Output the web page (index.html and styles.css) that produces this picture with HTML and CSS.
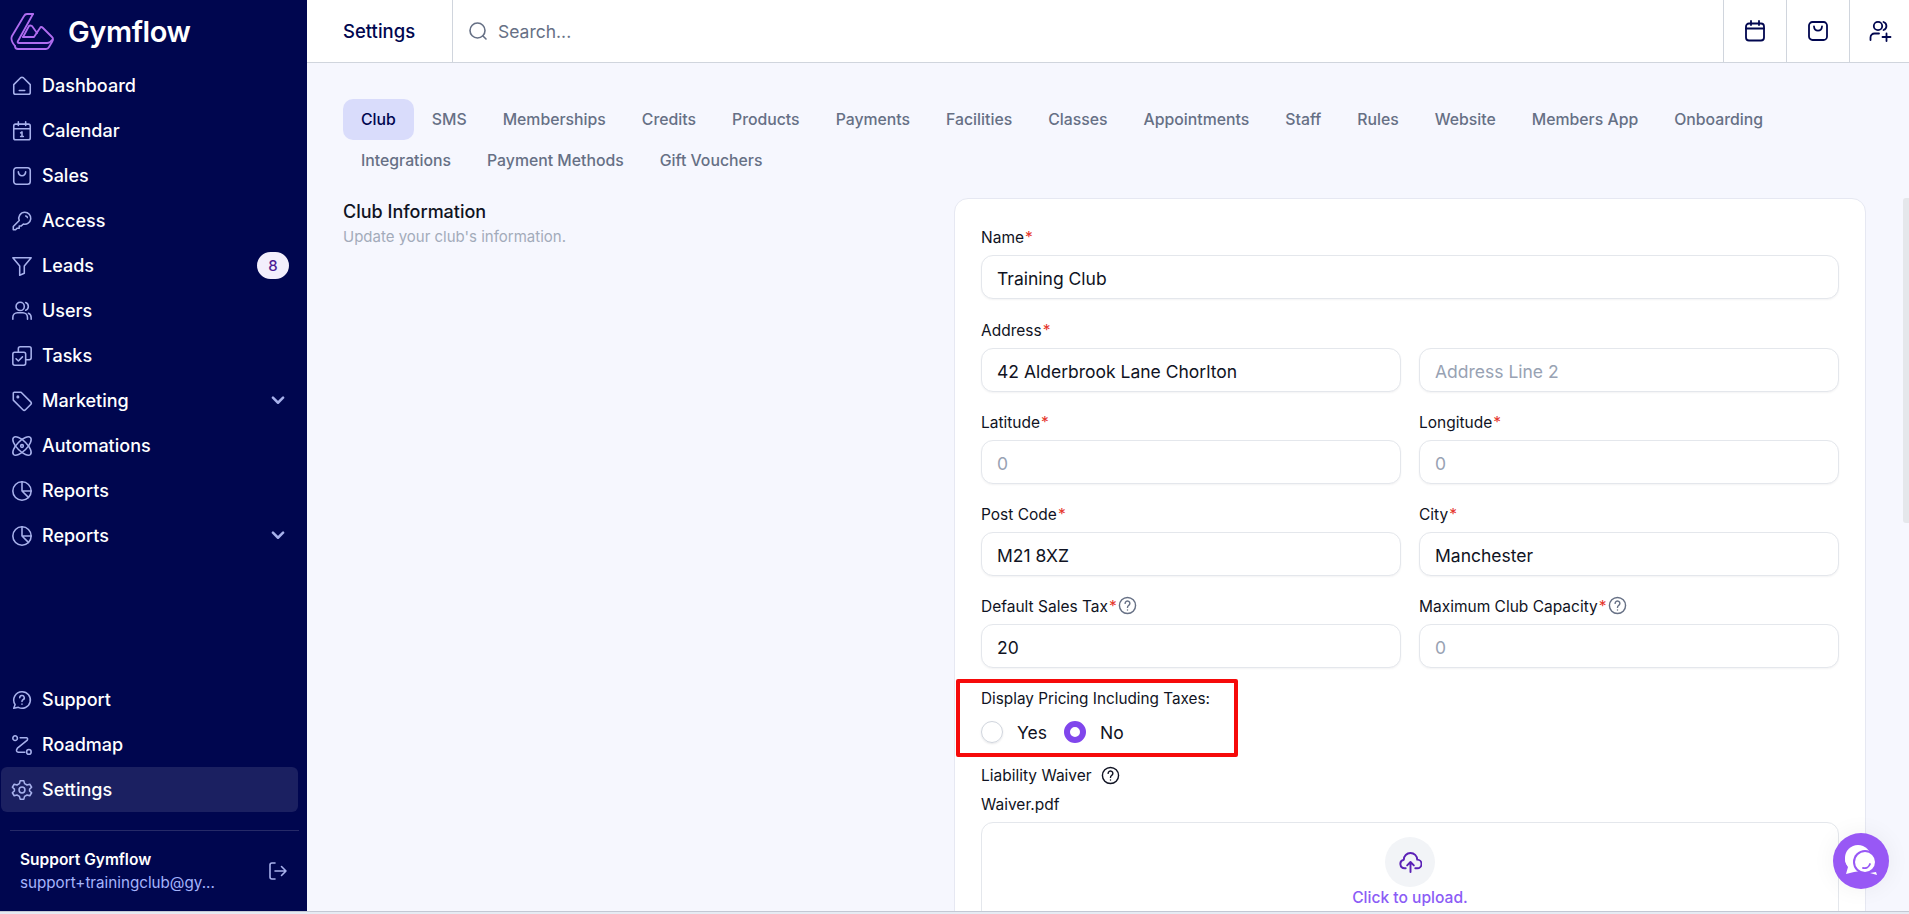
FILE: index.html
```html
<!DOCTYPE html>
<html lang="en">
<head>
  <meta charset="UTF-8">
  <meta name="viewport" content="width=device-width, initial-scale=1">
  <title>Gymflow - Settings</title>
  <link rel="stylesheet" href="styles.css">
</head>
<body>

  <div class="app">
    <aside class="sidebar">
      <div class="brand">
        <svg class="brand-logo" viewBox="10 13 44 38" fill="none" stroke="#b06cf0" stroke-width="1.8" stroke-linejoin="round" stroke-linecap="round">
          <path d="M33 14 H27 Q25 14 24 16 L12 36 Q10 40 15 46"/>
          <path d="M33 14 L18 41 Q17 43 19 43 H47 Q50 43 52 40"/>
          <path d="M23 37 L29 26 Q30 25 32 26 L37 33"/>
          <path d="M23 37 H34 L40 28 Q41 26 43 28 L52 37 Q54 39 52 42 L49 47 Q48 49 46 49 H18 Q15 49 15 46"/>
        </svg>
        <span class="brand-name">Gymflow</span>
      </div>

      <nav class="nav">
        <a class="nav-item"><svg class="nav-icon" viewBox="0 0 24 24"><path d="M3 10.500 L10.500 3 Q12 2 13.500 3 L21 10.500 V19 a2 2 0 0 1-2 2 H5 a2 2 0 0 1-2-2 Z"/><path d="M9 17 H15"/></svg>Dashboard</a>
        <a class="nav-item"><svg class="nav-icon" viewBox="0 0 24 24"><rect x="3" y="4.500" width="18" height="17" rx="2"/><path d="M3 9.500 H21 M8 2 V6 M16 2 V6"/><path d="M10.500 14 L12 13 V18 M10.500 18 H13.500"/></svg>Calendar</a>
        <a class="nav-item"><svg class="nav-icon" viewBox="0 0 24 24"><rect x="3" y="3" width="18" height="18" rx="3"/><path d="M8 7.500 C8.500 13 15.500 13 16 7.500"/></svg>Sales</a>
        <a class="nav-item"><svg class="nav-icon" viewBox="0 0 24 24"><path d="M15 2.500 a6.500 6.500 0 1 1 -1.500 12.800 L11 17.500 H9 V20 H6.500 L5 21.500 H2.500 V18 L9 11.500 A6.500 6.500 0 0 1 15 2.500 Z"/><path d="M16 6.500 a1.800 1.800 0 0 1 1.800 1.800"/></svg>Access</a>
        <a class="nav-item"><svg class="nav-icon" viewBox="0 0 24 24"><path d="M2 3 H22 L14.500 12 V20 L9.500 22 V12 Z"/></svg>Leads<span class="nav-badge">8</span></a>
        <a class="nav-item"><svg class="nav-icon" viewBox="0 0 24 24"><circle cx="10" cy="7" r="4.500"/><path d="M2 21 V19 a5 5 0 0 1 5-5 H13 a5 5 0 0 1 5 5 V21"/><path d="M16 2.800 a4.500 4.500 0 0 1 0 8.400 M19 14.500 a5 5 0 0 1 3 4.500 V21"/></svg>Users</a>
        <a class="nav-item"><svg class="nav-icon" viewBox="0 0 24 24"><rect x="2" y="8" width="14" height="14" rx="2"/><path d="M8 8 V4 a2 2 0 0 1 2-2 H20 a2 2 0 0 1 2 2 V14 a2 2 0 0 1-2 2 H16"/><path d="M5.500 15 L8 17.500 L12.500 13"/></svg>Tasks</a>
        <a class="nav-item"><svg class="nav-icon" viewBox="0 0 24 24"><path d="M2.500 3.500 a1 1 0 0 1 1-1 H11 L21.500 13 a2 2 0 0 1 0 2.800 L15.800 21.500 a2 2 0 0 1-2.800 0 L2.500 11 Z"/><circle cx="7.500" cy="7.500" r="0.800"/></svg>Marketing<svg class="nav-chevron" viewBox="0 0 12 8"><path d="M1.500 1.500 L6 6 L10.500 1.500"/></svg></a>
        <a class="nav-item"><svg class="nav-icon" viewBox="0 0 24 24"><ellipse cx="12" cy="12" rx="13" ry="5.500" transform="rotate(45 12 12)"/><ellipse cx="12" cy="12" rx="13" ry="5.500" transform="rotate(-45 12 12)"/><circle cx="12" cy="12" r="1.500"/></svg>Automations</a>
        <a class="nav-item"><svg class="nav-icon" viewBox="0 0 24 24"><circle cx="12" cy="12" r="10"/><path d="M12 2 V12 H22 M12 12 L19 19"/></svg>Reports</a>
        <a class="nav-item"><svg class="nav-icon" viewBox="0 0 24 24"><circle cx="12" cy="12" r="10"/><path d="M12 2 V12 H22 M12 12 L19 19"/></svg>Reports<svg class="nav-chevron" viewBox="0 0 12 8"><path d="M1.500 1.500 L6 6 L10.500 1.500"/></svg></a>
      </nav>

      <nav class="nav nav-bottom">
        <a class="nav-item"><svg class="nav-icon" viewBox="0 0 24 24"><path d="M12 3 a9 9 0 1 1 -4 17 L3 21 L4.500 17 A9 9 0 0 1 12 3 Z"/><path d="M9.500 9.500 a2.500 2.500 0 1 1 3.500 2.300 Q12 12.300 12 13.500 M12 16.500 V16.600"/></svg>Support</a>
        <a class="nav-item"><svg class="nav-icon" viewBox="0 0 24 24"><circle cx="4.500" cy="4.500" r="2.500"/><circle cx="19.500" cy="19.500" r="2.500"/><path d="M10 4 H17 Q19 5 17.500 7 L7 15.500 Q4.500 19 8 20 H15"/></svg>Roadmap</a>
        <a class="nav-item nav-item-active"><svg class="nav-icon" viewBox="0 0 24 24"><circle cx="12" cy="12" r="3.200"/><path d="M10 2 H14 L14.800 5 L17.500 6.500 L20.500 5.700 L22.500 9 L20.300 11 V13 L22.500 15 L20.500 18.300 L17.500 17.500 L14.800 19 L14 22 H10 L9.200 19 L6.500 17.500 L3.500 18.300 L1.500 15 L3.700 13 V11 L1.500 9 L3.500 5.700 L6.500 6.500 L9.200 5 Z"/></svg>Settings</a>
      </nav>

      <div class="user-block">
        <div class="user-text">
          <div class="user-name">Support Gymflow</div>
          <div class="user-email">support+trainingclub@gy...</div>
        </div>
        <svg class="user-logout" viewBox="0 0 20 20"><path d="M7 2 H4 a2 2 0 0 0-2 2 V16 a2 2 0 0 0 2 2 H7"/><path d="M7 10 H18 M13.500 5.500 L18 10 L13.500 14.500"/></svg>
      </div>
    </aside>

    <div class="main">
      <header class="topbar">
        <div class="topbar-title">Settings</div>
        <div class="topbar-search">
          <svg class="search-icon" viewBox="0 0 20 20"><circle cx="9.500" cy="9.500" r="7.500"/><path d="M15 15 L18 18"/></svg>
          <input class="search-input" type="text" placeholder="Search...">
        </div>
        <button class="topbar-btn"><svg viewBox="0 0 24 24"><rect x="3" y="4.500" width="18" height="17" rx="3"/><path d="M3 9.500 H21 M8 2 V6 M16 2 V6"/></svg></button>
        <button class="topbar-btn"><svg viewBox="0 0 24 24"><rect x="3" y="3" width="18" height="18" rx="3.500"/><path d="M8 7.500 C8.500 13 15.500 13 16 7.500"/></svg></button>
        <button class="topbar-btn topbar-btn-last"><svg viewBox="0 0 24 24"><circle cx="10" cy="7" r="4.200"/><path d="M2.500 21 V18.500 a4 4 0 0 1 4-4 H11"/><path d="M15.500 3 a4.200 4.200 0 0 1 0 8 M18.500 14.500 V22 M14.500 18 H22.500"/></svg></button>
      </header>

      <div class="content">
        <div class="tabs">
          <a class="tab tab-active">Club</a>
          <a class="tab">SMS</a>
          <a class="tab">Memberships</a>
          <a class="tab">Credits</a>
          <a class="tab">Products</a>
          <a class="tab">Payments</a>
          <a class="tab">Facilities</a>
          <a class="tab">Classes</a>
          <a class="tab">Appointments</a>
          <a class="tab">Staff</a>
          <a class="tab">Rules</a>
          <a class="tab">Website</a>
          <a class="tab">Members App</a>
          <a class="tab">Onboarding</a>
          <a class="tab">Integrations</a>
          <a class="tab">Payment Methods</a>
          <a class="tab">Gift Vouchers</a>
        </div>

        <div class="section">
          <div class="section-intro">
            <h2 class="section-title">Club Information</h2>
            <p class="section-sub">Update your club's information.</p>
          </div>

          <div class="card">
            <div class="field field-first">
              <label class="field-label">Name<span class="req">*</span></label>
              <input class="field-input" type="text" value="Training Club">
            </div>

            <div class="field-row">
              <div class="field">
                <label class="field-label">Address<span class="req">*</span></label>
                <input class="field-input" type="text" value="42 Alderbrook Lane Chorlton">
              </div>
              <div class="field">
                <label class="field-label field-label-blank">&nbsp;</label>
                <input class="field-input" type="text" placeholder="Address Line 2">
              </div>
            </div>

            <div class="field-row">
              <div class="field">
                <label class="field-label">Latitude<span class="req">*</span></label>
                <input class="field-input" type="text" placeholder="0">
              </div>
              <div class="field">
                <label class="field-label">Longitude<span class="req">*</span></label>
                <input class="field-input" type="text" placeholder="0">
              </div>
            </div>

            <div class="field-row">
              <div class="field">
                <label class="field-label">Post Code<span class="req">*</span></label>
                <input class="field-input" type="text" value="M21 8XZ">
              </div>
              <div class="field">
                <label class="field-label">City<span class="req">*</span></label>
                <input class="field-input" type="text" value="Manchester">
              </div>
            </div>

            <div class="field-row">
              <div class="field">
                <label class="field-label">Default Sales Tax<span class="req">*</span>
                  <svg class="help-icon" viewBox="0 0 20 20"><circle cx="10" cy="10" r="8.500"/><path d="M7.500 7.800 a2.500 2.500 0 1 1 3.800 2.100 Q10 10.700 10 12 M10 14.600 V14.700"/></svg>
                </label>
                <input class="field-input" type="text" value="20">
              </div>
              <div class="field">
                <label class="field-label">Maximum Club Capacity<span class="req">*</span>
                  <svg class="help-icon" viewBox="0 0 20 20"><circle cx="10" cy="10" r="8.500"/><path d="M7.500 7.800 a2.500 2.500 0 1 1 3.800 2.100 Q10 10.700 10 12 M10 14.600 V14.700"/></svg>
                </label>
                <input class="field-input" type="text" placeholder="0">
              </div>
            </div>

            <div class="pricing">
              <div class="pricing-label">Display Pricing Including Taxes:</div>
              <div class="radios">
                <label class="radio"><input type="radio" name="pricing">Yes</label>
                <label class="radio"><input type="radio" name="pricing" checked>No</label>
              </div>
              <div class="highlight-box"></div>
            </div>

            <div class="waiver-label">Liability Waiver
              <svg class="help-icon help-icon-dark" viewBox="0 0 20 20"><circle cx="10" cy="10" r="8.500"/><path d="M7.500 7.800 a2.500 2.500 0 1 1 3.800 2.100 Q10 10.700 10 12 M10 14.600 V14.700"/></svg>
            </div>
            <div class="waiver-file">Waiver.pdf</div>

            <div class="upload">
              <div class="upload-circle">
                <svg viewBox="0 0 24 24"><path d="M7 18 H6 a4.500 4.500 0 0 1-1-8.900 A7 7 0 0 1 19 9 a4.500 4.500 0 0 1 0 9 H17"/><path d="M12 22 V12 M8.500 15 L12 11.500 L15.500 15"/></svg>
              </div>
              <div class="upload-text">Click to upload.</div>
            </div>
          </div>
        </div>

        <div class="scroll-thumb"></div>
      </div>
    </div>

    <button class="chat-btn">
      <svg viewBox="0 0 40 40">
        <path d="M17 5 a13 13 0 0 0-10 21 L5 33 L13 31 L20 30 L17 5 Z" fill="#fff"/>
        <circle cx="17" cy="17" r="13" fill="#fff"/>
        <circle cx="24" cy="21" r="12" fill="#9858f5"/>
        <circle cx="24" cy="21" r="10" fill="#fff"/>
        <path d="M35 31 L36 34 L29 32 Z" fill="#fff"/>
        <path d="M22 27 a6 6 0 0 0 7-4" fill="none" stroke="#9858f5" stroke-width="1.800" stroke-linecap="round"/>
      </svg>
    </button>
  </div>

  <div class="window-edge"></div>

</body>
</html>
```

FILE: styles.css
```css
* {
  box-sizing: border-box;
}

body {
  font-family: Inter, "Noto Sans", Arial, sans-serif;
  margin: 0;
  padding: 0;
  height: 914px;
  overflow: hidden;
  background: #f6f7fe;
  color: #101323;
}

.app {
  display: flex;
  height: 911px;
  position: relative;
  overflow: hidden;
}

.window-edge {
  height: 3px;
  background: #e6ebf3;
  border-top: 1px solid #c4c8d4;
}

/* Sidebar */
.sidebar {
  width: 307px;
  flex-shrink: 0;
  background: #00064f;
  color: #fff;
  display: flex;
  flex-direction: column;
  padding-left: 1px;
}

.brand {
  height: 63px;
  display: flex;
  align-items: center;
  padding-left: 9px;
  gap: 15px;
}

.brand-logo {
  width: 44px;
  height: 38px;
}

.brand-name {
  font-size: 29px;
  font-weight: 600;
  letter-spacing: -0.4px;
  margin-left: -1px;
}

.nav {
  display: flex;
  flex-direction: column;
  width: 297px;
}

.nav-bottom {
  margin-top: auto;
}

.nav-item {
  height: 45px;
  display: flex;
  align-items: center;
  gap: 9px;
  padding-left: 10px;
  padding-right: 11px;
  border-radius: 6px;
  font-size: 18px;
  font-weight: 500;
}

.nav-item-active {
  background: #1b2061;
}

.nav-icon {
  width: 22px;
  height: 22px;
  flex-shrink: 0;
  fill: none;
  stroke: #a7b1ec;
  stroke-width: 1.7;
  stroke-linecap: round;
  stroke-linejoin: round;
}

.nav-badge {
  margin-left: auto;
  margin-right: -2px;
  width: 32px;
  height: 27px;
  border-radius: 14px;
  background: #f3effc;
  color: #4c1d95;
  font-size: 15px;
  display: flex;
  align-items: center;
  justify-content: center;
}

.nav-chevron {
  margin-left: auto;
  margin-right: 2px;
  width: 14px;
  height: 9px;
  fill: none;
  stroke: #a7b1ec;
  stroke-width: 2.2;
  stroke-linecap: round;
  stroke-linejoin: round;
}

.user-block {
  margin: 18px 8px 0 9px;
  height: 81px;
  border-top: 1px solid #262a68;
  display: flex;
  align-items: center;
  justify-content: space-between;
  padding: 0 1px 0 10px;
}

.user-text {
  flex: 1;
}

.user-name {
  font-size: 15.500px;
  font-weight: 600;
  line-height: 23px;
}

.user-email {
  font-size: 15.200px;
  color: #a5b4fc;
  line-height: 23px;
}

.user-logout {
  width: 20px;
  height: 20px;
  margin-right: 10px;
  fill: none;
  stroke: #a7b1ec;
  stroke-width: 1.6;
  stroke-linecap: round;
  stroke-linejoin: round;
}

/* Top bar */
.main {
  flex: 1;
  min-width: 0;
  display: flex;
  flex-direction: column;
}

.topbar {
  height: 63px;
  flex-shrink: 0;
  background: #fff;
  border-bottom: 1px solid #d0d5dd;
  display: flex;
  align-items: stretch;
}

.topbar-title {
  width: 146px;
  padding-left: 36px;
  display: flex;
  align-items: center;
  font-size: 18.500px;
  font-weight: 500;
  color: #00064f;
  border-right: 1px solid #d0d5dd;
}

.topbar-search {
  flex: 1;
  display: flex;
  align-items: center;
  gap: 10px;
  padding-left: 15px;
}

.search-icon {
  width: 20px;
  height: 20px;
  fill: none;
  stroke: #667085;
  stroke-width: 1.6;
  stroke-linecap: round;
}

.search-input {
  border: none;
  outline: none;
  flex: 1;
  padding: 0;
  font-family: inherit;
  font-size: 17.500px;
  color: #667085;
  background: transparent;
}

.search-input::placeholder {
  color: #667085;
}

.topbar-btn {
  width: 63px;
  background: #fff;
  border: none;
  border-left: 1px solid #d0d5dd;
  padding: 0;
  display: flex;
  align-items: center;
  justify-content: center;
}

.topbar-btn-last {
  width: 60px;
}

.topbar-btn svg {
  width: 24px;
  height: 24px;
  fill: none;
  stroke: #00064f;
  stroke-width: 1.8;
  stroke-linecap: round;
  stroke-linejoin: round;
}

/* Content */
.content {
  flex: 1;
  min-height: 0;
  position: relative;
  padding: 36px 43px 0 36px;
}

.tabs {
  display: flex;
  flex-wrap: wrap;
}

.tab {
  height: 41px;
  padding: 0 18px;
  display: flex;
  align-items: center;
  border-radius: 10px;
  font-size: 15.800px;
  font-weight: 500;
  color: #667085;
}

.tab-active {
  background: #d9dcfb;
  color: #00064f;
}

.section {
  display: flex;
  margin-top: 17px;
}

.section-intro {
  width: 611px;
  flex-shrink: 0;
  padding-top: 2px;
}

.section-title {
  margin: 0;
  font-size: 18px;
  font-weight: 500;
  line-height: 24px;
  color: #101323;
}

.section-sub {
  margin: 1px 0 0;
  font-size: 15px;
  line-height: 24px;
  color: #a3abba;
}

.card {
  width: 912px;
  height: 900px;
  background: #fff;
  border: 1px solid #e6e8f2;
  border-radius: 14px;
  padding: 28px 26px 0;
}

.field {
  flex: 1;
  min-width: 0;
  margin-bottom: 20px;
}

.field-first {
  margin-bottom: 21px;
}

.field-row {
  display: flex;
  gap: 18px;
}

.field-label {
  display: flex;
  align-items: center;
  height: 20px;
  margin-bottom: 8px;
  font-size: 15.500px;
  color: #101323;
}

.req {
  color: #e5342b;
  margin-left: 1px;
}

.help-icon {
  width: 19px;
  height: 19px;
  margin-left: 1px;
  margin-top: -2px;
  fill: none;
  stroke: #667085;
  stroke-width: 1.5;
  stroke-linecap: round;
}

.help-icon-dark {
  stroke: #101323;
  margin-left: 9px;
}

.field-input {
  display: block;
  width: 100%;
  height: 44px;
  padding: 2px 15px 0;
  border: 1px solid #e4e7ec;
  border-radius: 12px;
  box-shadow: 0 1px 2px rgba(16, 24, 40, 0.05);
  outline: none;
  font-family: inherit;
  font-size: 17.500px;
  color: #101323;
}

.field-input::placeholder {
  color: #98a2b3;
}

.pricing {
  position: relative;
  margin-top: -9px;
  height: 78px;
}

.pricing-label {
  font-size: 15.300px;
  line-height: 20px;
  padding-top: 10px;
}

.radios {
  display: flex;
  gap: 17px;
  margin-top: 12px;
}

.radio {
  display: flex;
  align-items: center;
  gap: 14px;
  font-size: 17.500px;
  height: 22px;
}

.radio input {
  appearance: none;
  margin: 0;
  width: 22px;
  height: 22px;
  border-radius: 50%;
  border: 1px solid #d0d5dd;
  box-shadow: 0 1px 2px rgba(16, 24, 40, 0.1);
}

.radio input:checked {
  border: 6.500px solid #8046ec;
  box-shadow: none;
}

.highlight-box {
  position: absolute;
  left: -25px;
  top: 0;
  width: 282px;
  height: 78px;
  border: 4px solid #f60a0a;
  border-radius: 2px;
}

.waiver-label {
  margin-top: 9px;
  font-size: 15.500px;
  line-height: 20px;
  display: flex;
  align-items: center;
}

.waiver-file {
  margin-top: 9px;
  font-size: 15.500px;
  line-height: 20px;
}

.upload {
  margin-top: 7px;
  height: 200px;
  border: 1px solid #e4e7ec;
  border-radius: 12px;
  display: flex;
  flex-direction: column;
  align-items: center;
  padding-top: 14px;
}

.upload-circle {
  width: 50px;
  height: 50px;
  border-radius: 50%;
  background: #f2f4f7;
  display: flex;
  align-items: center;
  justify-content: center;
}

.upload-circle svg {
  width: 23px;
  height: 23px;
  fill: none;
  stroke: #5b21b6;
  stroke-width: 2;
  stroke-linecap: round;
  stroke-linejoin: round;
}

.upload-text {
  margin-top: 1px;
  font-size: 15.600px;
  font-weight: 500;
  line-height: 20px;
  color: #8b5cf6;
}

.scroll-thumb {
  position: absolute;
  top: 135px;
  right: 0;
  width: 6px;
  height: 325px;
  border-radius: 3px 0 0 3px;
  background: #e5e7eb;
}

.chat-btn {
  position: absolute;
  left: 1833px;
  top: 833px;
  width: 56px;
  height: 56px;
  border: none;
  border-radius: 50%;
  background: #9858f5;
  padding: 8px;
  box-shadow: 0 0 24px rgba(0, 0, 0, 0.06);
}

.chat-btn svg {
  display: block;
  width: 40px;
  height: 40px;
}
```
